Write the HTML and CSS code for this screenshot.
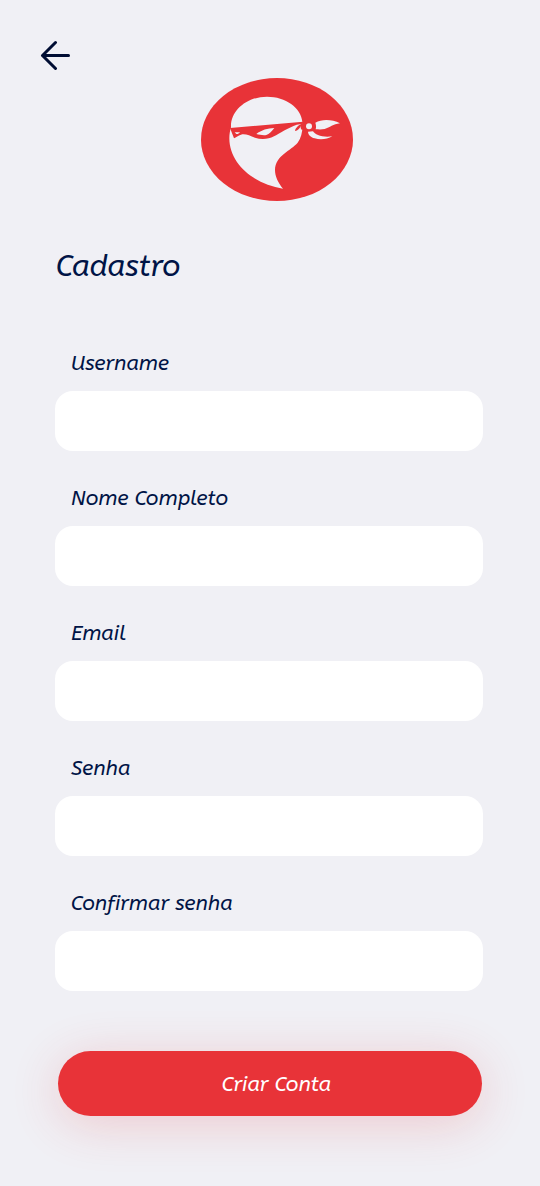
FILE: index.html
```html
<!DOCTYPE html>
<html lang="pt-BR">
<head>
  <meta charset="utf-8">
  <meta name="viewport" content="width=device-width, initial-scale=1">
  <title>Cadastro</title>
  <link rel="stylesheet" href="styles.css">
</head>
<body>
  <main class="page">
    <header class="header">
      <button class="back" type="button" aria-label="Voltar">
        <svg class="back-icon" viewBox="0 0 30 30" aria-hidden="true">
          <path d="M28.500 15.500H2.500M15.500 2.500L2.500 15.500L15.500 28.500"/>
        </svg>
      </button>
      <svg class="logo" viewBox="33 24 456 369" role="img" aria-label="Logo">
        <ellipse class="red" cx="261" cy="208.500" rx="228" ry="184.500"/>
        <path class="light" d="M123 172C121 121 172 80 231 80C287 80 333 113 337 155C339 182 334 204 323 218C303 242 256 256 255 300C255 319 264 338 279 356C194 343 118 283 118 205C118 193 120 182 123 172Z"/>
        <path class="red" d="M120 174L339 155L339 161L320 164C295 173 268 190 252 199C235 208 213 209 195 203C179 197 165 190 153 194C145 197 138 202 132 205Z"/>
        <path class="red" d="M339 160C328 163 316 174 315 183C323 182 330 175 332 168C331 174 333 179 337 180L342 170Z"/>
        <path class="light" d="M134 187L150 187C147 191 142 193 139 192Z"/>
        <path class="light" d="M199 192C214 180 233 175 253 174C244 184 238 193 229 195C219 197 209 194 199 192Z"/>
        <circle class="light" cx="357" cy="169" r="9"/>
        <path class="light" d="M376 158C396 147 426 148 450 160C429 162 420 173 404 177C394 179 386 178 377 178C379 171 378 164 376 158Z"/>
        <path class="light" d="M354 185L369 184C375 195 398 203 427 199C412 208 390 210 374 205C361 201 355 195 354 185Z"/>
      </svg>
    </header>
    <form class="form">
      <h1 class="title">Cadastro</h1>
      <div class="field">
        <label class="label" for="username">Username</label>
        <input class="input" id="username" type="text">
      </div>
      <div class="field">
        <label class="label" for="nome">Nome Completo</label>
        <input class="input" id="nome" type="text">
      </div>
      <div class="field">
        <label class="label" for="email">Email</label>
        <input class="input" id="email" type="email">
      </div>
      <div class="field">
        <label class="label" for="senha">Senha</label>
        <input class="input" id="senha" type="password">
      </div>
      <div class="field">
        <label class="label" for="confirmar">Confirmar senha</label>
        <input class="input" id="confirmar" type="password">
      </div>
      <button class="submit" type="submit">Criar Conta</button>
    </form>
  </main>
</body>
</html>
```
FILE: styles.css
```css
* {
  box-sizing: border-box;
}

body {
  margin: 0;
  background: #f0f0f5;
  color: #001446;
  font-family: ABeeZee, "Open Sans", "Noto Sans", sans-serif;
  font-style: italic;
}

.page {
  padding: 40px 57px 70px 55px;
}

.header {
  display: grid;
  grid-template-rows: 38px auto;
}

.back {
  width: 30px;
  height: 30px;
  margin-left: -15px;
  padding: 0;
  border: 0;
  background: none;
  cursor: pointer;
}

.back-icon {
  display: block;
  width: 30px;
  height: 30px;
  fill: none;
  stroke: #000d33;
  stroke-width: 3;
  stroke-linecap: round;
  stroke-linejoin: round;
}

.logo {
  width: 152px;
  height: 123px;
  margin-left: 16px;
  justify-self: center;
}

.red {
  fill: #e83338;
}

.light {
  fill: #f0f0f5;
}

.form {
  display: flex;
  flex-direction: column;
  gap: 32px;
  margin-top: 45px;
}

.title {
  margin: 0 0 30px;
  padding-left: 1px;
  font-size: 30px;
  font-weight: 400;
  line-height: 40px;
}

.field {
  display: flex;
  flex-direction: column;
  gap: 12px;
}

.label {
  padding: 1px 0 0 16px;
  font-size: 21px;
  line-height: 30px;
}

.input {
  width: 100%;
  height: 60px;
  padding: 0 20px;
  border: 0;
  border-radius: 18px;
  background: #fff;
  color: inherit;
  font: inherit;
  font-size: 21px;
}

.submit {
  height: 65px;
  margin: 28px 1px 0 3px;
  padding: 1px 0 0 13px;
  border: 0;
  border-radius: 33px;
  background: #e83338;
  box-shadow: 0 8px 50px rgba(232, 51, 56, 0.2);
  color: #fff;
  font: inherit;
  font-size: 21px;
  cursor: pointer;
}
```
